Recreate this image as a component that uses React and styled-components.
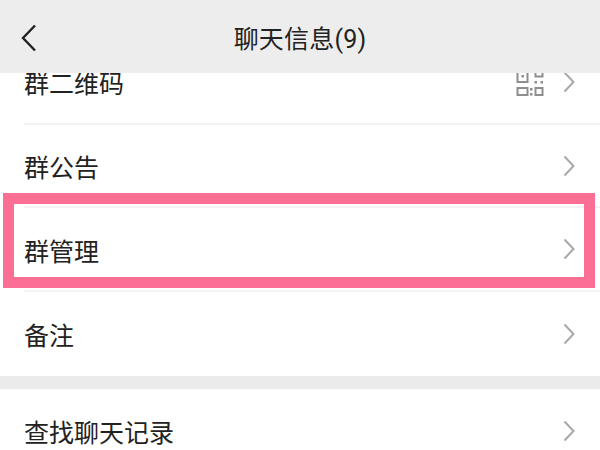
import React from "react";
import styled, { createGlobalStyle } from "styled-components";

const GlobalStyle = createGlobalStyle`
  html, body {
    margin: 0;
    padding: 0;
    background: #fff;
  }
`;

const Page = styled.div`
  position: relative;
  width: 600px;
  height: 450px;
  overflow: hidden;
  display: flex;
  flex-direction: column;
  background: #fff;
  font-family: Roboto, "Noto Sans CJK SC", sans-serif;
  color: #222;
`;

const Header = styled.header`
  flex: none;
  height: 73px;
  display: flex;
  align-items: center;
  justify-content: center;
  position: relative;
  z-index: 1;
  background: #ededed;
`;

const BackButton = styled.svg`
  position: absolute;
  left: 20px;
  top: 24px;
  width: 18px;
  height: 28px;
`;

const Title = styled.h1`
  margin: 6px 0 0;
  font-size: 25px;
  font-weight: 400;
  line-height: 1;
  letter-spacing: 0.2px;
`;

const Scroll = styled.div`
  flex: 1;
  min-height: 0;
  overflow: hidden;
`;

const List = styled.div`
  margin-top: -32px;
`;

const Row = styled.div`
  height: 83.7px;
  box-sizing: border-box;
  margin-left: 24px;
  padding-right: 25px;
  display: flex;
  align-items: center;
  justify-content: space-between;
  border-bottom: ${(p) => (p.$last ? "none" : "2px solid #f3f3f3")};
`;

const Label = styled.span`
  font-size: 25px;
  line-height: 1;
  padding-top: 6px;
`;

const Trailing = styled.div`
  display: flex;
  align-items: center;
  gap: 19px;
`;

const QrWrap = styled.div`
  display: flex;
  padding-top: 1px;
`;

const Gap = styled.div`
  height: 13px;
  background: #ebebeb;
`;

const Chevron = styled.svg`
  width: 12px;
  height: 22px;
`;

const Highlight = styled.div`
  position: absolute;
  left: 3px;
  top: 193px;
  width: 592px;
  height: 95px;
  box-sizing: border-box;
  border: 11px solid #fc6f94;
`;

const RowChevron = () => (
  <Chevron viewBox="0 0 12 22" fill="none" stroke="#a8a8a8" strokeWidth="2">
    <path d="M1.5 1.5 L10.5 11 L1.5 20.5" />
  </Chevron>
);

const QrIcon = () => (
  <QrWrap>
    <svg width="28" height="28" viewBox="0 0 28 28" fill="none" stroke="#8e8e8e" strokeWidth="2">
      <rect x="1.5" y="1" width="10" height="13" />
      <rect x="5.5" y="7" width="2.5" height="2.5" fill="#8e8e8e" stroke="none" />
      <path d="M19.5 1 V8.5 H26.5 V1" />
      <rect x="18.5" y="13" width="2.5" height="2.5" fill="#8e8e8e" stroke="none" />
      <rect x="24.5" y="13" width="2.5" height="2.5" fill="#8e8e8e" stroke="none" />
      <rect x="1.5" y="20" width="10" height="7" />
      <rect x="19.5" y="20" width="7" height="7" />
      <rect x="14" y="20" width="2.5" height="2.5" fill="#8e8e8e" stroke="none" />
      <rect x="14" y="25" width="2.5" height="2.5" fill="#8e8e8e" stroke="none" />
    </svg>
  </QrWrap>
);

export default function App() {
  return (
    <Page>
      <GlobalStyle />
      <Header>
        <BackButton viewBox="0 0 18 28" fill="none" stroke="#222" strokeWidth="2.4">
          <path d="M15 1.5 L3 14 L15 26.5" />
        </BackButton>
        <Title>聊天信息(9)</Title>
      </Header>
      <Scroll>
        <List>
          <Row>
            <Label>群二维码</Label>
            <Trailing>
              <QrIcon />
              <RowChevron />
            </Trailing>
          </Row>
          <Row>
            <Label>群公告</Label>
            <RowChevron />
          </Row>
          <Row>
            <Label>群管理</Label>
            <RowChevron />
          </Row>
          <Row $last>
            <Label>备注</Label>
            <RowChevron />
          </Row>
          <Gap />
          <Row $last>
            <Label>查找聊天记录</Label>
            <RowChevron />
          </Row>
        </List>
      </Scroll>
      <Highlight />
    </Page>
  );
}
